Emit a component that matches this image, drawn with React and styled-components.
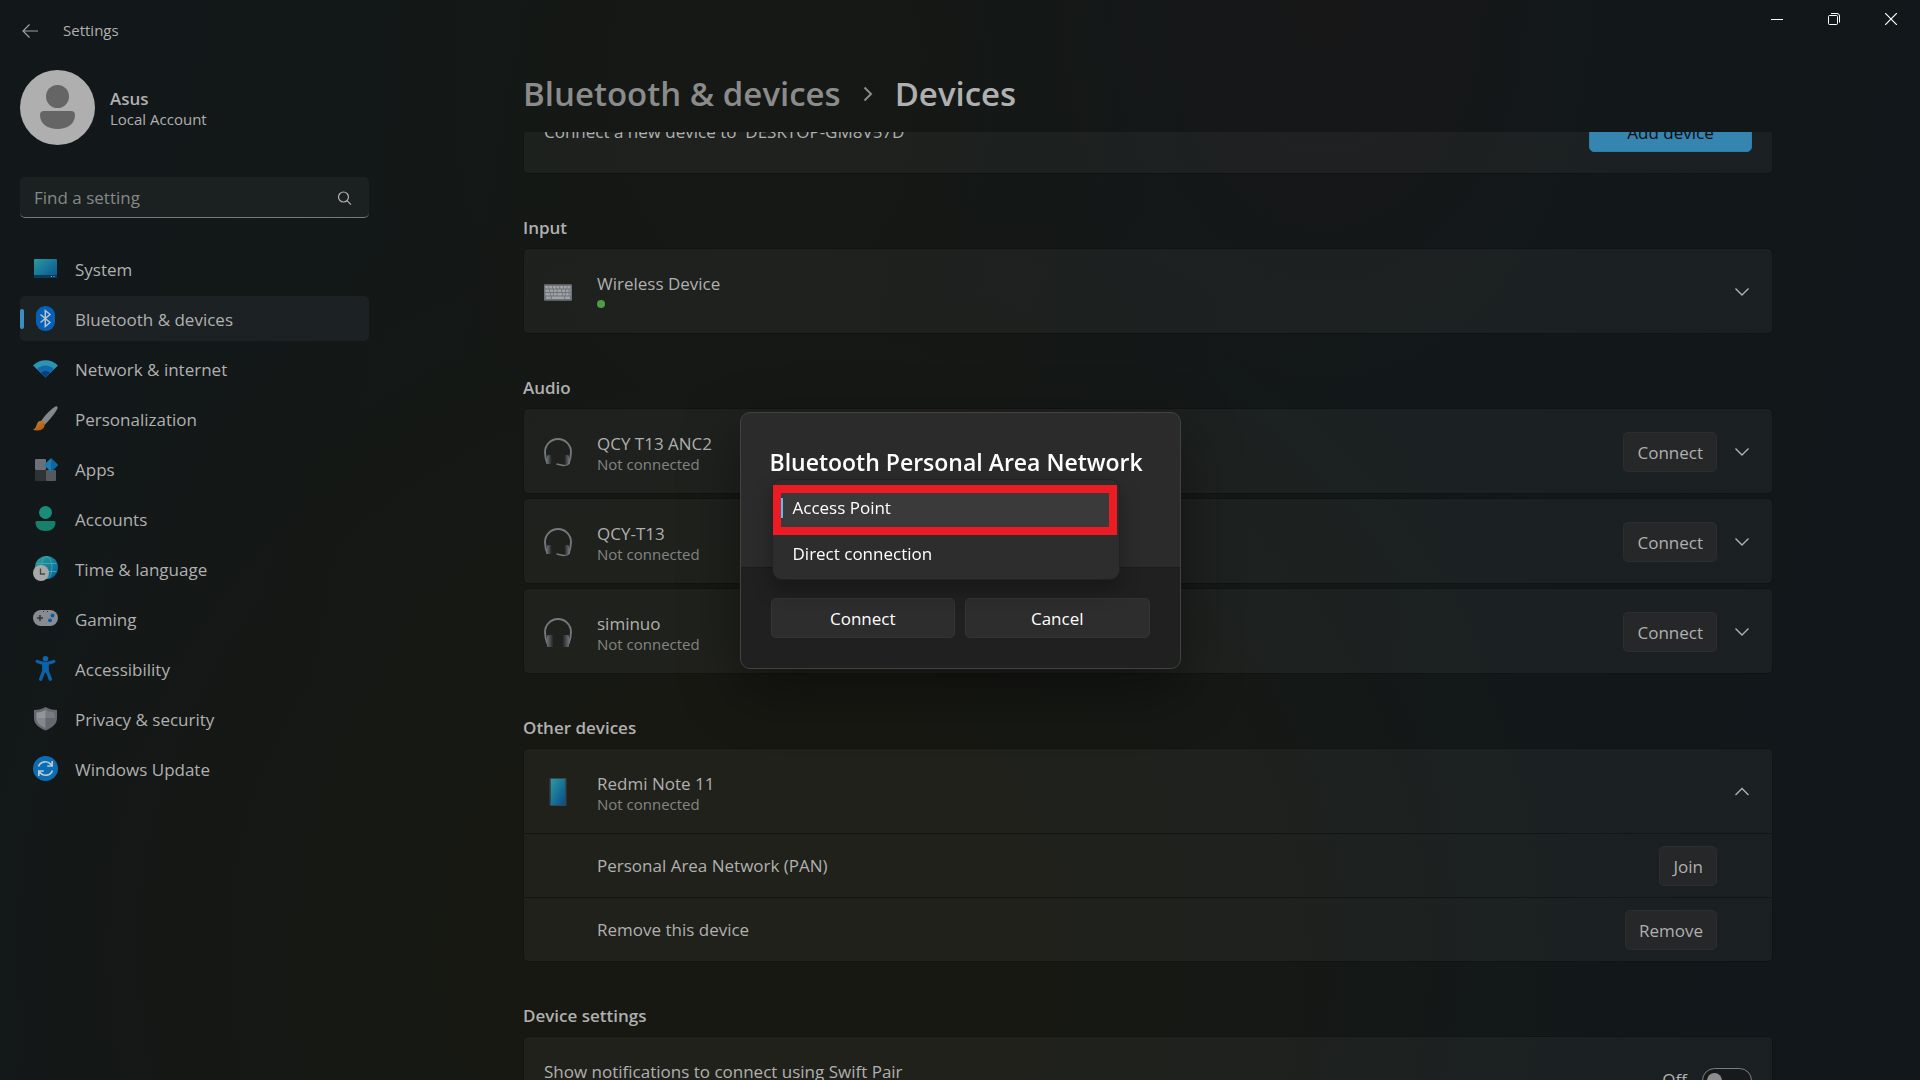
import React, { useLayoutEffect, useRef } from 'react';
import styled, { createGlobalStyle } from 'styled-components';

const GlobalStyle = createGlobalStyle`
    * {
        box-sizing: border-box;
    }
    body {
        margin: 0;
        background-color: #13181a;
        color: #b0b0b0;
        font-family: "Open Sans", "Noto Sans", sans-serif;
        font-size: 17px;
        line-height: 24px;
        overflow: hidden;
    }
    button, input, select {
        font: inherit;
        color: inherit;
    }
    h1, h2, p, ul {
        margin: 0;
        padding: 0;
    }
`;

const Window = styled.div`
    height: 100vh;
    display: flex;
    flex-direction: column;
    background:
        radial-gradient(ellipse 16% 40% at 69% 0%, rgba(24, 23, 24, 0.9), transparent),
        radial-gradient(ellipse 22% 50% at 40% 8%, rgba(22, 24, 20, 0.9), transparent),
        radial-gradient(ellipse 45% 75% at 40% 88%, rgba(23, 24, 18, 1) 30%, transparent),
        linear-gradient(100deg, #12181a 0%, #131816 30%, #12181a 75%, #11171a 100%);
`;
const TitleBar = styled.header`
    height: 62px;
    flex: none;
    display: flex;
    align-items: center;
`;
const BackButton = styled.button`
    width: 63px;
    height: 40px;
    padding: 0 0 0 22px;
    display: flex;
    align-items: center;
    border: none;
    background: none;
`;
const AppName = styled.span`
    flex: 1;
    padding-bottom: 2px;
    font-size: 15px;
`;
const WindowControls = styled.div`
    display: flex;
    align-self: flex-start;
    padding-right: 1px;
`;
const ControlButton = styled.button`
    width: 57px;
    height: 38px;
    padding: 0;
    display: flex;
    align-items: center;
    justify-content: center;
    border: none;
    background: none;
    color: #fff;
`;
const Body = styled.div`
    flex: 1;
    min-height: 0;
    display: flex;
`;

/* sidebar */
const Sidebar = styled.aside`
    width: 376px;
    flex: none;
    padding: 8px 7px 0 20px;
`;
const Profile = styled.div`
    display: flex;
    align-items: center;
    gap: 15px;
`;
const ProfileText = styled.div`
    line-height: 21px;
    font-size: 15px;
    padding-top: 2px;
`;
const ProfileName = styled.div`
    font-size: 17px;
    font-weight: 600;
`;
const SearchBox = styled.label`
    height: 41px;
    margin: 32px 0 28px;
    padding: 2px 17px 0 14px;
    display: flex;
    align-items: center;
    background: #1b2121;
    border-radius: 5px;
    border-bottom: 1px solid #767a7a;
`;
const SearchInput = styled.input`
    flex: 1;
    min-width: 0;
    padding: 0;
    border: none;
    outline: none;
    background: none;
    &::placeholder {
        color: #858888;
        opacity: 1;
    }
`;
const NavList = styled.ul`
    list-style: none;
    display: flex;
    flex-direction: column;
    gap: 5px;
`;
const NavLink = styled.a`
    height: 45px;
    display: flex;
    align-items: center;
    gap: 17px;
    border-radius: 5px;
    color: inherit;
    text-decoration: none;
    background: ${props => props.$active ? "#1c2123" : "none"};
    &::before {
        content: "";
        width: 4px;
        height: 20px;
        margin-right: -8px;
        border-radius: 2px;
        background: ${props => props.$active ? "#3a8fbf" : "none"};
    }
    svg {
        flex: none;
    }
`;
const NavText = styled.span`
    padding-top: 2px;
`;

/* main column */
const Main = styled.main`
    flex: 1;
    min-width: 0;
    display: flex;
    flex-direction: column;
`;
const Breadcrumb = styled.h1`
    width: 100%;
    max-width: 1250px;
    height: 70px;
    flex: none;
    margin: 0 auto;
    padding-bottom: 6px;
    display: flex;
    align-items: center;
    gap: 22px;
    font-size: 33px;
    font-weight: 600;
    line-height: 48px;
`;
const CrumbLink = styled.a`
    color: #8a8b8a;
    text-decoration: none;
`;
const Scroller = styled.div`
    flex: 1;
    min-height: 0;
    overflow-y: auto;
    scrollbar-width: none;
`;
const Content = styled.div`
    max-width: 1250px;
    margin: 0 auto;
    padding-bottom: 60px;
`;
const SectionTitle = styled.h2`
    padding: 42px 0 8px;
    font-size: 17px;
    font-weight: 600;
    line-height: 24px;
`;
const Cards = styled.div`
    display: flex;
    flex-direction: column;
    gap: 4px;
`;
const Card = styled.div`
    border: 1px solid rgba(0, 0, 0, 0.16);
    border-radius: 5px;
    background: rgba(255, 255, 255, 0.04);
    background-clip: padding-box;
`;
const CardRow = styled.div`
    height: 84px;
    padding: 2px 20px 0;
    display: flex;
    align-items: center;
    gap: 15px;
    svg {
        flex: none;
    }
`;
const SubRow = styled.div`
    height: 64px;
    padding: 0 55px 0 73px;
    display: flex;
    align-items: center;
    justify-content: space-between;
    border-top: 1px solid #121614;
`;
const DeviceText = styled.div`
    flex: 1;
    align-self: flex-start;
    padding: 23px 0 0 ${props => props.$indent ? "10px" : "0"};
    line-height: 20px;
`;
const RowText = styled.div`
    flex: 1;
`;
const Status = styled.div`
    font-size: 15px;
    color: #848584;
`;
const OnlineDot = styled.div`
    width: 8px;
    height: 8px;
    margin-top: 6px;
    border-radius: 50%;
    background: #4f9a45;
`;
const Button = styled.button`
    height: 40px;
    padding: 2px 13px 0;
    border: 1px solid rgba(255, 255, 255, 0.03);
    border-radius: 5px;
    background: #252728;
`;
const AccentButton = styled(Button)`
    width: 163px;
    background: #3585b1;
    border-color: #2f7dab;
    color: #080c0e;
`;
const ExpandButton = styled.button`
    width: 20px;
    height: 40px;
    padding: 0;
    display: flex;
    align-items: center;
    justify-content: center;
    border: none;
    background: none;
`;
const SwitchLabel = styled.label`
    display: flex;
    align-items: center;
    gap: 15px;
`;
const Switch = styled.input`
    appearance: none;
    width: 50px;
    height: 25px;
    margin: 0;
    padding: 4px;
    border: 1px solid #7d7f7e;
    border-radius: 13px;
    background: #161a1a;
    &::before {
        content: "";
        display: block;
        width: 15px;
        height: 15px;
        border-radius: 50%;
        background: #8c8e8d;
    }
`;

/* dialog */
const Overlay = styled.div`
    position: fixed;
    inset: 0;
    display: flex;
    align-items: center;
    justify-content: center;
    pointer-events: none;
`;
const Dialog = styled.section`
    width: 441px;
    border: 1px solid #424242;
    border-radius: 10px;
    background: #2b2b2b;
    color: #fff;
    box-shadow: 0 20px 60px rgba(0, 0, 0, 0.4);
    pointer-events: auto;
`;
const DialogBody = styled.div`
    height: 154px;
    padding: 32px 29px 0;
    position: relative;
`;
const DialogTitle = styled.h2`
    font-size: 23px;
    font-weight: 600;
    line-height: 34px;
    white-space: nowrap;
`;
const DialogActions = styled.div`
    padding: 30px;
    display: grid;
    grid-template-columns: 1fr 1fr;
    gap: 10px;
    border-top: 1px solid #1c1c1c;
    border-radius: 0 0 9px 9px;
    background: #202020;
`;
const DialogButton = styled(Button)`
    background: #2d2d2d;
    border-color: #343434;
`;
const Menu = styled.div`
    position: absolute;
    top: 66px;
    left: 31px;
    width: 348px;
`;
const OptionList = styled.select`
    appearance: none;
    display: block;
    width: 100%;
    height: 101px;
    padding: 5px 4px 3px;
    border: 1px solid #222;
    border-radius: 10px;
    outline: none;
    overflow: hidden;
    background: #2d2d2d;
    box-shadow: 0 10px 20px rgba(0, 0, 0, 0.28);
    option {
        height: 46px;
        min-height: 46px;
        padding: 11px 16px 0;
        border-radius: 5px;
        color: #fff;
    }
    option:checked {
        color: #fff;
        -webkit-text-fill-color: #fff;
        background:
            linear-gradient(#4cc2ff, #4cc2ff) 0 13px / 6px 20px no-repeat,
            linear-gradient(#3a3a3a, #3a3a3a);
    }
`;
const Highlight = styled.div`
    position: absolute;
    top: 6px;
    left: 1px;
    width: 344px;
    height: 50px;
    border: 8px solid #ed1c24;
    pointer-events: none;
`;

/* icons */
const Chevron = ({ up }) => (
    <svg width="16" height="10" viewBox="0 0 16 10" fill="none" stroke="#b0b0b0" strokeWidth="1.4">
        <path d={up ? "M1.5 8 8 1.5 14.5 8" : "M1.5 1.5 8 8 14.5 1.5"} />
    </svg>
);

const Avatar = () => (
    <svg width="75" height="75" viewBox="0 0 75 75">
        <circle cx="37.5" cy="37.5" r="37.5" fill="#afafaf" />
        <circle cx="37.5" cy="26.5" r="11.5" fill="#656565" />
        <path d="M24 41h27a4 4 0 0 1 4 4c0 9-8 14-17.500 14S20 54 20 45a4 4 0 0 1 4-4z" fill="#656565" />
    </svg>
);

const Icon = ({ children }) => (
    <svg width="25" height="25" viewBox="0 0 25 25">{children}</svg>
);

const SystemIcon = () => (
    <Icon>
        <defs>
            <linearGradient id="sys" x1="0" y1="0" x2="1" y2="1">
                <stop offset="0" stopColor="#2a9aa0" />
                <stop offset="1" stopColor="#07528f" />
            </linearGradient>
        </defs>
        <rect x="1" y="3" width="23" height="19" rx="1" fill="url(#sys)" />
        <path d="M1 19h23v2a1 1 0 0 1-1 1H2a1 1 0 0 1-1-1z" fill="#0a3c58" />
        <path d="M18 20.500h1M20.500 20.500h1" stroke="#7fb5c8" />
    </Icon>
);
const BluetoothIcon = () => (
    <Icon>
        <rect x="3" y="0" width="19" height="25" rx="9" fill="#0560b6" />
        <path d="M7.500 8.500 17 16.500l-4.700 4V4.500l4.700 4-9.500 8" fill="none" stroke="#b8c4d0" strokeWidth="1.500" />
    </Icon>
);
const NetworkIcon = () => (
    <Icon>
        <path d="M0 9.500C7 2.500 18 2.500 25 9.500L12.500 21.500z" fill="#2b95b2" />
        <path d="M4 13.200c5-4.800 12-4.800 17 0l-8.500 8.300z" fill="#1268a8" />
        <path d="M8 17c3-2.600 6-2.600 9 0l-4.500 4.500z" fill="#0a3f7c" />
    </Icon>
);
const PersonalizationIcon = () => (
    <Icon>
        <defs>
            <linearGradient id="brush" x1="0" y1="0" x2="1" y2="1">
                <stop offset="0" stopColor="#c58a22" />
                <stop offset="1" stopColor="#b2501a" />
            </linearGradient>
        </defs>
        <path d="M8 15.500C12 9 18 3 22.500.5c1.500-.6 2.600.8 2 2C22.500 7 16 14.500 11.500 19z" fill="#85878c" />
        <path d="M11 19.500C15.500 15 21.500 8 24.500 2.500 22.500 7 16 14.500 11.500 19z" fill="#4f5256" />
        <path d="M4 18c1-3 5-4.500 7-1.500 2 4-1 8-6 8-2 0-4-.3-5-1 2.500-.8 3-3 4-5.500z" fill="url(#brush)" />
    </Icon>
);
const AppsIcon = () => (
    <Icon>
        <rect x="2" y="3" width="11" height="11" rx="1" fill="#6d7078" />
        <rect x="2" y="14" width="11" height="11" rx="1" fill="#303336" />
        <rect x="13" y="14" width="10" height="11" rx="1" fill="#55585c" />
        <rect x="13" y="4" width="10" height="10" rx="1" fill="#1d7cb0" transform="rotate(45 18 9)" />
        <path d="M18 2.200 24.800 9 18 15.800z" fill="#12659f" />
    </Icon>
);
const AccountsIcon = () => (
    <Icon>
        <circle cx="12.500" cy="6.500" r="6.500" fill="#198c7a" />
        <path d="M4 15h17a1.500 1.500 0 0 1 1.500 1.500c0 5-4 8.500-10 8.500s-10-3.500-10-8.500A1.500 1.500 0 0 1 4 15z" fill="#16806c" />
    </Icon>
);
const TimeIcon = () => (
    <Icon>
        <defs>
            <linearGradient id="globe" x1="0" y1="0" x2="1" y2="1">
                <stop offset="0" stopColor="#2ba293" />
                <stop offset="1" stopColor="#0a5d9e" />
            </linearGradient>
        </defs>
        <circle cx="13.500" cy="11.500" r="11.500" fill="url(#globe)" />
        <g fill="none" stroke="#38a9ae" strokeWidth="1">
            <ellipse cx="13.500" cy="11.500" rx="5.500" ry="11" />
            <path d="M3.500 7.500h20M3.500 15.500h20" />
        </g>
        <circle cx="8" cy="17" r="8" fill="#a7a9a9" />
        <path d="M7.500 12.500V18H12" fill="none" stroke="#444" strokeWidth="1.300" />
    </Icon>
);
const GamingIcon = () => (
    <Icon>
        <rect x="0" y="4" width="25" height="16" rx="8" fill="#888b91" />
        <path d="M4 12h6M7 9v6" stroke="#333" strokeWidth="1.500" />
        <circle cx="19.500" cy="9.500" r="1.900" fill="#075aa5" />
        <circle cx="17" cy="14.300" r="1.900" fill="#075aa5" />
        <path d="M10 5.500h1M14 5.500h1" stroke="#333" />
    </Icon>
);
const AccessibilityIcon = () => (
    <Icon>
        <circle cx="12.500" cy="2.800" r="2.800" fill="#0b67ab" />
        <path
            d="M4.300 5.500 12.500 8.200 20.700 5.500M10.800 8v7L7.700 23.200M14.200 8v7L17.300 23.200M12.500 8v7"
            fill="none" stroke="#0b62a8" strokeWidth="3.400" strokeLinecap="round" strokeLinejoin="round"
        />
    </Icon>
);
const PrivacyIcon = () => (
    <Icon>
        <path d="M12.500 1C16 3 19 4 24 4v8c0 6-5 10-11.500 12.500C6 22 1 18 1 12V4c5 0 8-1 11.500-3z" fill="#666a6f" />
        <path d="M12.500 4C15.500 5.500 18 6.300 21.500 6.500V12c0 4.500-3.500 7.500-9 10z" fill="#777b80" />
        <path d="M12.500 4C9.500 5.500 7 6.300 3.500 6.500V12c0 4.500 3.500 7.500 9 10z" fill="#929599" />
        <path d="M3.500 12h9v10c-5.500-2.500-9-5.500-9-10z" fill="#84878b" />
        <path d="M12.500 12h9c0 4.500-3.500 7.500-9 10z" fill="#65696e" />
    </Icon>
);
const UpdateIcon = () => (
    <Icon>
        <circle cx="12.500" cy="12.500" r="12.500" fill="#0d6db2" />
        <g fill="none" stroke="#b8c8d4" strokeWidth="1.700">
            <path d="M5.500 10.500C7.500 5 14.500 4 18.500 9M19.200 5v5h-5" />
            <path d="M19.500 14.500C17.500 20 10.500 21 6.500 16M5.800 20v-5h5" />
        </g>
    </Icon>
);

const DeviceIcon = ({ children }) => (
    <svg width="28" height="30" viewBox="0 0 28 30">{children}</svg>
);
const KeyboardIcon = () => (
    <svg width="28" height="30" viewBox="0 0 29 30">
        <rect x="0" y="7" width="29" height="17" rx="1" fill="#6d7277" />
        <g stroke="#a0a3a6" strokeWidth="2.600" fill="none">
            <path d="M1.500 10h26" strokeDasharray="3 .8" />
            <path d="M1.500 13.700h26" strokeDasharray="4 .8 3 .8 3 .8" />
            <path d="M1.500 17.400h26" strokeDasharray="5 .8 2 .8 3 .8" />
            <path d="M2 21h5M8 21h13M22 21h5" />
        </g>
    </svg>
);
const HeadphonesIcon = ({ mic }) => (
    <DeviceIcon>
        <defs>
            <linearGradient id="cup" x1="0" y1="0" x2="1" y2="0">
                <stop offset="0" stopColor="#6b7074" />
                <stop offset="1" stopColor="#191b1b" />
            </linearGradient>
            <linearGradient id="cupRight" x1="1" y1="0" x2="0" y2="0">
                <stop offset="0" stopColor="#6b7074" />
                <stop offset="1" stopColor="#191b1b" />
            </linearGradient>
        </defs>
        <path
            d="M3.500 27C1.500 22 1 18.500 1 15a13 13 0 0 1 26 0c0 3.500-.5 7-2.500 12"
            fill="none" stroke="#74797e" strokeWidth="1.900"
        />
        <rect x="3" y="18" width={mic ? 5 : 7} height={mic ? 9 : 12} rx="1.500" fill="url(#cup)" />
        <rect x={mic ? 20 : 18} y="18" width={mic ? 5 : 7} height={mic ? 9 : 12} rx="1.500" fill="url(#cupRight)" />
        {mic && <path d="M25.500 25c-.5 3-3 3.500-6 3.500l-7-1.500" fill="none" stroke="#74797e" strokeWidth="1.500" />}
    </DeviceIcon>
);
const PhoneIcon = () => (
    <DeviceIcon>
        <defs>
            <linearGradient id="phone" x1="0" y1="0" x2="1" y2="1">
                <stop offset="0" stopColor="#2a9ba3" />
                <stop offset="1" stopColor="#084c8c" />
            </linearGradient>
        </defs>
        <rect x="5.500" y="1" width="17" height="28" rx="1" fill="#39464a" />
        <rect x="7" y="2" width="14" height="26" fill="url(#phone)" />
    </DeviceIcon>
);

const navItems = [
    { label: "System", icon: <SystemIcon /> },
    { label: "Bluetooth & devices", icon: <BluetoothIcon />, active: true },
    { label: "Network & internet", icon: <NetworkIcon /> },
    { label: "Personalization", icon: <PersonalizationIcon /> },
    { label: "Apps", icon: <AppsIcon /> },
    { label: "Accounts", icon: <AccountsIcon /> },
    { label: "Time & language", icon: <TimeIcon /> },
    { label: "Gaming", icon: <GamingIcon /> },
    { label: "Accessibility", icon: <AccessibilityIcon /> },
    { label: "Privacy & security", icon: <PrivacyIcon /> },
    { label: "Windows Update", icon: <UpdateIcon /> },
];

const audioDevices = [
    { name: "QCY T13 ANC2", mic: true },
    { name: "QCY-T13", mic: true },
    { name: "siminuo", mic: false },
];

const PanDialog = () => (
    <Overlay>
        <Dialog role="dialog" aria-labelledby="pan-title">
            <DialogBody>
                <DialogTitle id="pan-title">Bluetooth Personal Area Network</DialogTitle>
                <Menu>
                    <OptionList size="2" defaultValue="ap" aria-label="Connect using">
                        <option value="ap">Access Point</option>
                        <option value="direct">Direct connection</option>
                    </OptionList>
                    <Highlight />
                </Menu>
            </DialogBody>
            <DialogActions>
                <DialogButton>Connect</DialogButton>
                <DialogButton>Cancel</DialogButton>
            </DialogActions>
        </Dialog>
    </Overlay>
);

const App = () => {
  const scroller = useRef(null);

  // the list opens slightly scrolled, under the breadcrumb
  useLayoutEffect(() => {
    scroller.current.scrollTop = 44;
  }, []);

  return (
    <>
    <GlobalStyle />
    <Window>
        <TitleBar>
            <BackButton aria-label="Back">
                <svg width="16" height="14" viewBox="0 0 16 14" fill="none" stroke="#a0a0a0" strokeWidth="1.200">
                    <path d="M7.500.5 1 7l6.500 6.500M1 7h15" />
                </svg>
            </BackButton>
            <AppName>Settings</AppName>
            <WindowControls>
                <ControlButton aria-label="Minimize">
                    <svg width="12" height="12" viewBox="0 0 12 12" stroke="#fff"><path d="M0 6.500h12" /></svg>
                </ControlButton>
                <ControlButton aria-label="Restore">
                    <svg width="12" height="12" viewBox="0 0 12 12" fill="none" stroke="#fff">
                        <rect x=".5" y="2.500" width="9" height="9" rx="1" />
                        <path d="M3 .5h6a2.500 2.500 0 0 1 2.500 2.500v6.500" />
                    </svg>
                </ControlButton>
                <ControlButton aria-label="Close">
                    <svg width="12" height="12" viewBox="0 0 12 12" stroke="#fff" strokeWidth="1.200">
                        <path d="M0 0l12 12M12 0 0 12" />
                    </svg>
                </ControlButton>
            </WindowControls>
        </TitleBar>
        <Body>
            <Sidebar>
                <Profile>
                    <Avatar />
                    <ProfileText>
                        <ProfileName>Asus</ProfileName>
                        Local Account
                    </ProfileText>
                </Profile>
                <SearchBox>
                    <SearchInput type="text" placeholder="Find a setting" aria-label="Find a setting" />
                    <svg width="15" height="15" viewBox="0 0 15 15" fill="none" stroke="#b0b0b0" strokeWidth="1.200">
                        <circle cx="6.500" cy="6" r="5" />
                        <path d="M10 9.700 14 13.700" />
                    </svg>
                </SearchBox>
                <nav>
                    <NavList>
                        {navItems.map(item => (
                            <li key={item.label}>
                                <NavLink href="#" $active={item.active}>
                                    {item.icon}
                                    <NavText>{item.label}</NavText>
                                </NavLink>
                            </li>
                        ))}
                    </NavList>
                </nav>
            </Sidebar>
            <Main>
                <Breadcrumb>
                    <CrumbLink href="#">Bluetooth &amp; devices</CrumbLink>
                    <svg width="10" height="16" viewBox="0 0 10 16" fill="none" stroke="#8a8b8a" strokeWidth="2">
                        <path d="M1.500 1.500 8 8l-6.500 6.500" />
                    </svg>
                    <span>Devices</span>
                </Breadcrumb>
                <Scroller ref={scroller}>
                    <Content>
                        <Card>
                            <CardRow>
                                <RowText>Connect a new device to &nbsp;DESKTOP-GM8V57D</RowText>
                                <AccentButton>Add device</AccentButton>
                            </CardRow>
                        </Card>

                        <SectionTitle>Input</SectionTitle>
                        <Card>
                            <CardRow>
                                <KeyboardIcon />
                                <DeviceText $indent>
                                    Wireless Device
                                    <OnlineDot />
                                </DeviceText>
                                <ExpandButton aria-label="Expand"><Chevron /></ExpandButton>
                            </CardRow>
                        </Card>

                        <SectionTitle>Audio</SectionTitle>
                        <Cards>
                            {audioDevices.map(device => (
                                <Card key={device.name}>
                                    <CardRow>
                                        <HeadphonesIcon mic={device.mic} />
                                        <DeviceText $indent>
                                            {device.name}
                                            <Status>Not connected</Status>
                                        </DeviceText>
                                        <Button>Connect</Button>
                                        <ExpandButton aria-label="Expand"><Chevron /></ExpandButton>
                                    </CardRow>
                                </Card>
                            ))}
                        </Cards>

                        <SectionTitle>Other devices</SectionTitle>
                        <Card>
                            <CardRow>
                                <PhoneIcon />
                                <DeviceText $indent>
                                    Redmi Note 11
                                    <Status>Not connected</Status>
                                </DeviceText>
                                <ExpandButton aria-label="Collapse"><Chevron up /></ExpandButton>
                            </CardRow>
                            <SubRow>
                                Personal Area Network (PAN)
                                <Button>Join</Button>
                            </SubRow>
                            <SubRow>
                                Remove this device
                                <Button>Remove</Button>
                            </SubRow>
                        </Card>

                        <SectionTitle>Device settings</SectionTitle>
                        <Card>
                            <CardRow>
                                <DeviceText>Show notifications to connect using Swift Pair</DeviceText>
                                <SwitchLabel>
                                    Off
                                    <Switch type="checkbox" role="switch" />
                                </SwitchLabel>
                            </CardRow>
                        </Card>
                    </Content>
                </Scroller>
            </Main>
        </Body>
    </Window>
    <PanDialog />
    </>
  )
}

export default App
